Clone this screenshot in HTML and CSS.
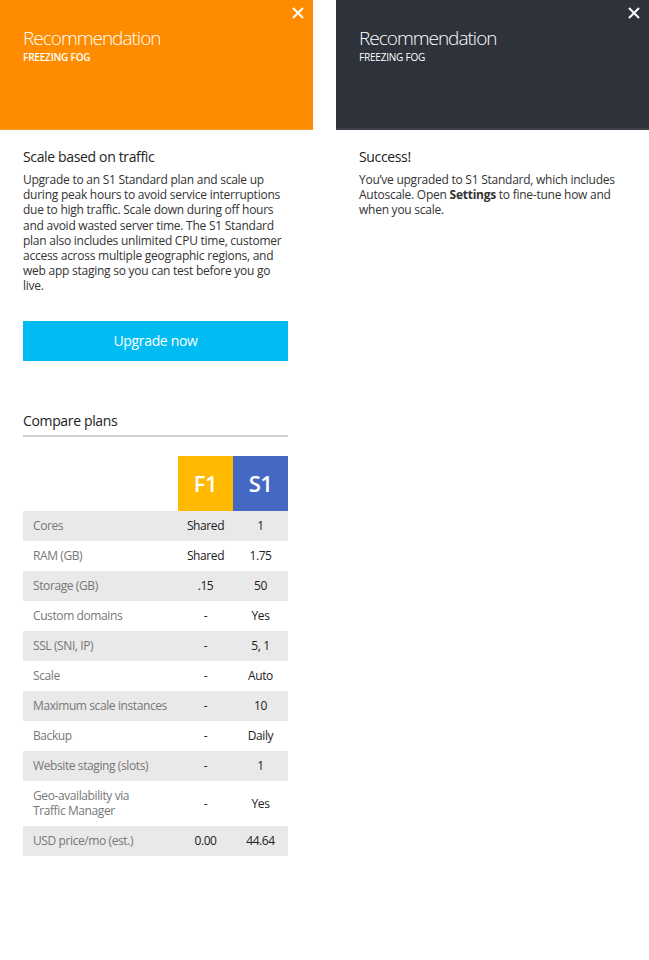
FILE: index.html
```html
<!DOCTYPE html>
<html>
<head>
<meta charset="utf-8">
<link rel="stylesheet" href="styles.css">
</head>
<body>
<div class="page">
  <section class="blade">
    <header class="blade-head head-orange">
      <button class="close" aria-label="Close"><svg width="12" height="12" viewBox="0 0 12 12"><path d="M1 1L11 11M11 1L1 11" stroke="#fff" stroke-width="2" fill="none"/></svg></button>
      <h1 class="title">Recommendation</h1>
      <div class="subtitle sub-bold">FREEZING FOG</div>
    </header>
    <div class="blade-body">
      <h2 class="heading">Scale based on traffic</h2>
      <p class="text">Upgrade to an S1 Standard plan and scale up during peak hours to avoid service interruptions due to high traffic. Scale down during off hours and avoid wasted server time. The S1 Standard plan also includes unlimited CPU time, customer access across multiple geographic regions, and web app staging so you can test before you go live.</p>
      <button class="upgrade">Upgrade now</button>
      <h2 class="section-title">Compare plans</h2>
      <table class="plans">
        <thead>
          <tr class="plan-head"><th></th><th><span class="badge badge-f1">F1</span></th><th><span class="badge badge-s1">S1</span></th></tr>
        </thead>
        <tbody>
          <tr class="alt"><td>Cores</td><td>Shared</td><td>1</td></tr>
          <tr><td>RAM (GB)</td><td>Shared</td><td>1.75</td></tr>
          <tr class="alt"><td>Storage (GB)</td><td>.15</td><td>50</td></tr>
          <tr><td>Custom domains</td><td>-</td><td>Yes</td></tr>
          <tr class="alt"><td>SSL (SNI, IP)</td><td>-</td><td>5, 1</td></tr>
          <tr><td>Scale</td><td>-</td><td>Auto</td></tr>
          <tr class="alt"><td>Maximum scale instances</td><td>-</td><td>10</td></tr>
          <tr><td>Backup</td><td>-</td><td>Daily</td></tr>
          <tr class="alt"><td>Website staging (slots)</td><td>-</td><td>1</td></tr>
          <tr class="tall"><td>Geo-availability via<br>Traffic Manager</td><td>-</td><td>Yes</td></tr>
          <tr class="alt"><td>USD price/mo (est.)</td><td>0.00</td><td>44.64</td></tr>
        </tbody>
      </table>
    </div>
  </section>
  <section class="blade">
    <header class="blade-head head-dark">
      <button class="close" aria-label="Close"><svg width="12" height="12" viewBox="0 0 12 12"><path d="M1 1L11 11M11 1L1 11" stroke="#fff" stroke-width="2" fill="none"/></svg></button>
      <h1 class="title">Recommendation</h1>
      <div class="subtitle">FREEZING FOG</div>
    </header>
    <div class="blade-body">
      <h2 class="heading">Success!</h2>
      <p class="text">You’ve upgraded to S1 Standard, which includes Autoscale. Open <b>Settings</b> to fine-tune how and when you scale.</p>
    </div>
  </section>
</div>
</body>
</html>
```
FILE: styles.css
```css
* { box-sizing: border-box; }
html, body { margin: 0; padding: 0; background: #fff; }
body { font-family: "Open Sans", "Noto Sans", sans-serif; color: #333; letter-spacing: -0.25px; }
.page {
  display: grid;
  grid-template-columns: 313px 313px;
  column-gap: 23px;
  width: 649px;
}
.blade-head {
  position: relative;
  height: 130px;
  padding: 26px 23px 0;
  color: #fff;
}
.head-orange { background: #ff8c00; border-bottom: 1px solid #ff9d2a; }
.head-dark { background: #2e323a; border-bottom: 2px solid #3b3f47; }
.close {
  position: absolute;
  top: 7px;
  right: 9px;
  width: 12px;
  height: 12px;
  padding: 0;
  border: 0;
  background: none;
  display: block;
}
.close svg { display: block; }
.title {
  margin: 0;
  font-size: 19px;
  font-weight: 300;
  line-height: 24px;
  letter-spacing: -1px;
}
.subtitle {
  font-size: 10px;
  line-height: 12px;
  margin-top: 1px;
  font-weight: 400;
  letter-spacing: -0.2px;
}
.sub-bold { font-weight: 600; }
.blade-body { padding: 18px 21px 0 23px; }
.heading {
  margin: 0;
  font-size: 14px;
  font-weight: 400;
  line-height: 18px;
  color: #222;
  letter-spacing: -0.35px;
}
.text {
  margin: 6px 0 0;
  font-size: 12px;
  line-height: 15.2px;
  color: #333;
}
.text b { font-weight: 700; display: inline-block; }
.upgrade {
  display: block;
  width: 265px;
  height: 40px;
  margin-top: 27px;
  border: 0;
  background: #00bcf2;
  color: #fff;
  font-family: inherit;
  font-size: 14px;
  font-weight: 400;
  letter-spacing: -0.35px;
  padding: 0;
}
.section-title {
  margin: 51px 0 0;
  width: 265px;
  font-size: 14px;
  font-weight: 400;
  line-height: 18px;
  padding-bottom: 5px;
  border-bottom: 2px solid #cfcfcf;
  color: #222;
  letter-spacing: -0.35px;
}
.plans {
  margin-top: 19px;
  width: 265px;
  border-collapse: collapse;
  font-size: 12px;
  letter-spacing: -0.4px;
}
.plans th { padding: 0; height: 55px; }
.plans th:first-child { width: 155px; }
.badge {
  display: flex;
  align-items: center;
  justify-content: center;
  width: 55px;
  height: 55px;
  color: #fff;
  font-size: 22px;
  font-weight: 600;
  letter-spacing: -0.5px;
}
.badge-f1 { background: #ffb900; }
.badge-s1 { background: #4668c5; }
.plans td {
  height: 30px;
  padding: 0;
  text-align: center;
  color: #222;
  line-height: 15px;
}
.plans td:first-child {
  text-align: left;
  padding-left: 10px;
  color: #777;
}
.plans .alt td { background: #e9e9e9; }
.plans .tall td { height: 45px; }
```
